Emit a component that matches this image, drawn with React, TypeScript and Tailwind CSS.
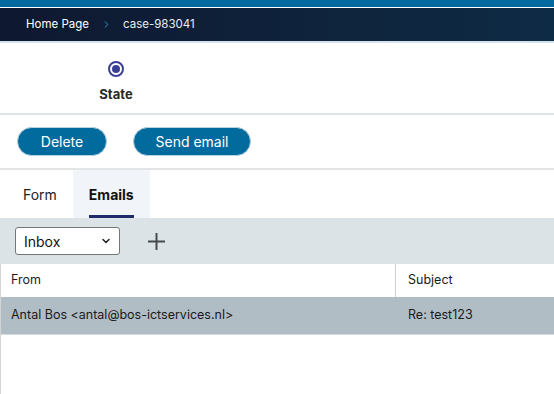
import { ChevronDown, ChevronRight } from 'lucide-react'

export default function App() {
  return (
    <div className="w-[554px] h-[394px] overflow-hidden bg-white font-['Inter',sans-serif] flex flex-col">
      {/* top strip */}
      <div className="h-[8px] bg-[#006a9e] border-b border-white shrink-0" />
      <div className="h-[33px] bg-gradient-to-r from-[#0e1830] to-[#0e2b45] flex items-center pl-[26px] text-[11.5px] text-white shrink-0">
        <span>Home Page</span>
        <ChevronRight className="w-[11px] h-[11px] text-[#2b9bd3] ml-[12px] mr-[11px]" strokeWidth={2} />
        <span className="text-[#e8eef5]">case-983041</span>
      </div>
      <div className="h-[2px] bg-[#d6e3ee] shrink-0" />

      {/* state */}
      <div className="h-[72px] border-b-2 border-[#dde5ec] shrink-0">
        <div className="w-[232px] flex flex-col items-center pt-[18px]">
          <div className="w-[16px] h-[16px] rounded-full border-2 border-[#3a3f94] flex items-center justify-center">
            <div className="w-[8px] h-[8px] rounded-full bg-[#3a3f94]" />
          </div>
          <div className="mt-[9px] text-[13px] font-bold text-[#2a2a2a] leading-[16px]">State</div>
        </div>
      </div>

      {/* actions */}
      <div className="h-[55px] border-b-2 border-[#e2e4e6] flex items-start gap-[26px] pl-[17px] pt-[12px] shrink-0">
        <button className="w-[90px] h-[29px] rounded-full bg-[#006b9c] border border-[#b9d2e0] text-white text-[14px]">Delete</button>
        <button className="w-[118px] h-[29px] rounded-full bg-[#006b9c] border border-[#b9d2e0] text-white text-[14px]">Send email</button>
      </div>

      {/* tabs */}
      <div className="h-[48px] flex pl-[7px] shrink-0">
        <div className="px-[16px] flex items-center text-[14px] text-[#222]">Form</div>
        <div className="px-[16px] bg-[#f1f4f9] relative flex items-center text-[14px] font-bold text-[#111]">
          Emails
          <div className="absolute left-[16px] right-[16px] bottom-0 h-[3px] bg-[#1f2a6b]" />
        </div>
      </div>

      {/* toolbar */}
      <div className="h-[46px] bg-[#dce3e6] flex items-center pl-[15px] gap-[28px] shrink-0">
        <div className="w-[105px] h-[28px] bg-white border border-[#767676] rounded-[3px] flex items-center justify-between pl-[8px] pr-[7px] text-[14px] text-[#111]">
          <span>Inbox</span>
          <ChevronDown className="w-[12px] h-[12px] text-[#222]" strokeWidth={3} />
        </div>
        <svg width="17" height="17" viewBox="0 0 17 17" className="text-[#474a4d]">
          <path d="M8.5 0v17M0 8.5h17" stroke="currentColor" strokeWidth="2" />
        </svg>
      </div>

      {/* table */}
      <div className="flex-1 border-l border-[#d4d4d4] flex flex-col">
        <div className="h-[33px] flex text-[12.5px] text-[#1a1a1a] shrink-0">
          <div className="w-[395px] border-r border-[#cfcfcf] flex items-center pl-[10px]">From</div>
          <div className="flex-1 flex items-center pl-[12px]">Subject</div>
        </div>
        <div className="h-[38px] bg-[#b1bdc5] border-b border-[#d6dcdf] flex text-[12.5px] text-[#1a1a1a] shrink-0">
          <div className="w-[395px] flex items-center pl-[10px]">Antal Bos &lt;antal@bos-ictservices.nl&gt;</div>
          <div className="flex-1 flex items-center pl-[12px]">Re: test123</div>
        </div>
      </div>
    </div>
  )
}
